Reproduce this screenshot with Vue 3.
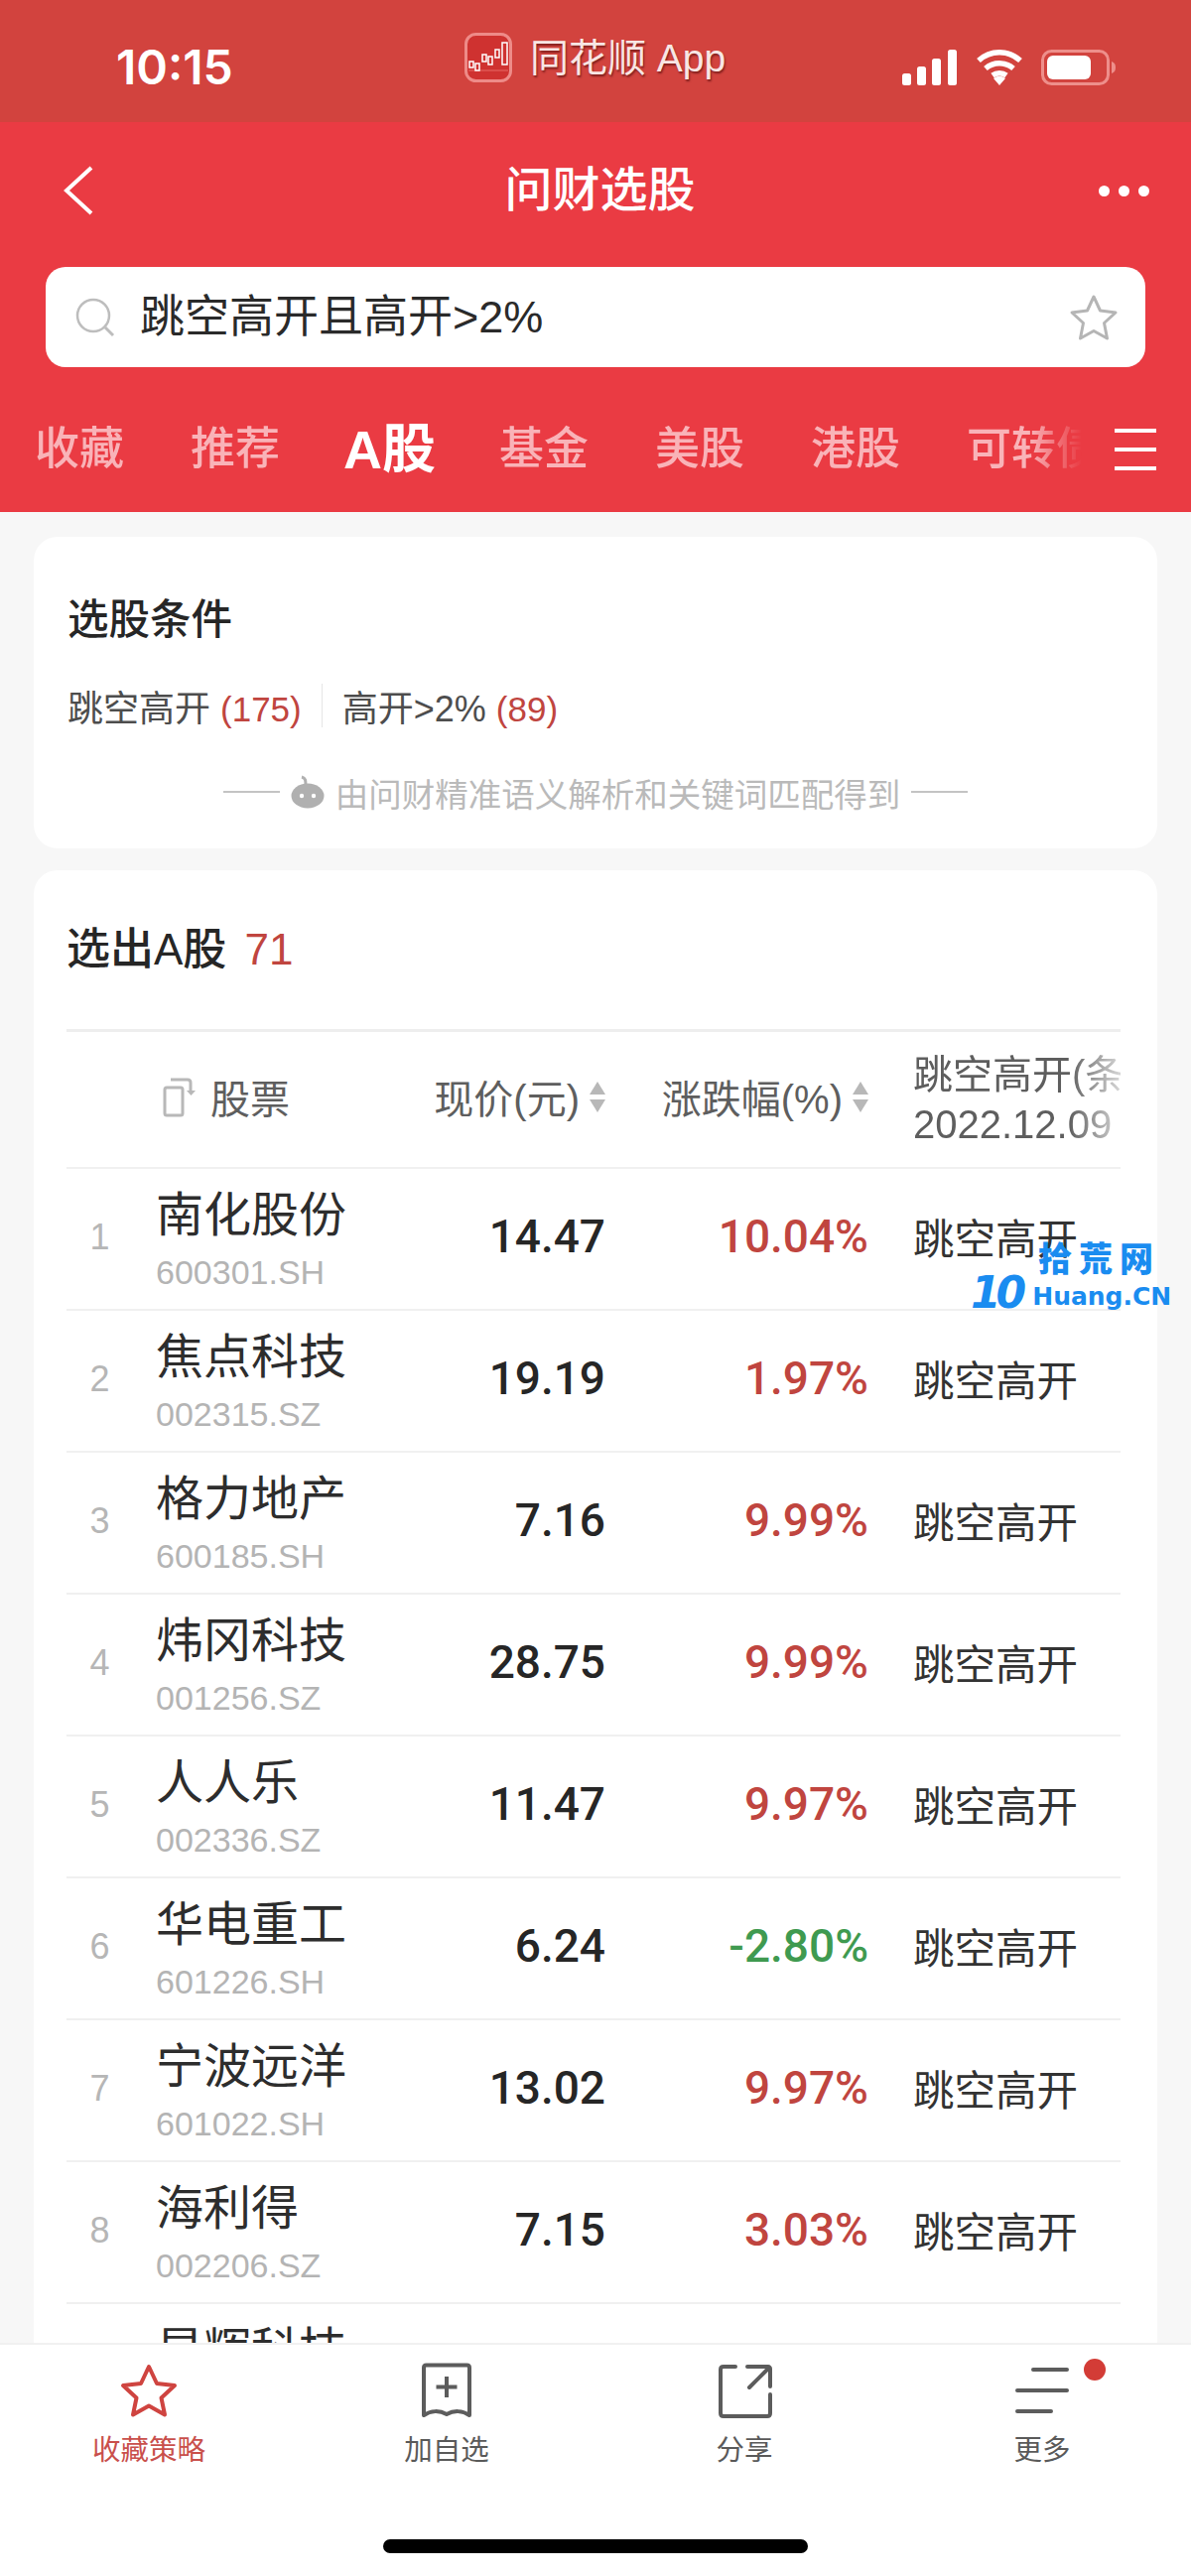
<template>
  <div class="phone">
    <!-- 상태바 -->
    <div class="status-bar">
      <span class="time">10:15</span>
      <div class="island">
        <svg class="app-icon" width="48" height="50" viewBox="0 0 48 50">
          <rect x="1.500" y="1.500" width="45" height="47" rx="10" fill="#cf3230" stroke="#ee8b88" stroke-width="3" />
          <path d="M4 38h40" stroke="#e86a66" stroke-width="1" />
          <g fill="none" stroke="#fff" stroke-width="1.500">
            <rect x="5" y="29" width="4" height="6" /><rect x="11" y="31" width="4" height="7" />
            <rect x="18" y="22" width="4" height="7" /><rect x="24" y="24" width="4" height="8" />
            <rect x="31" y="17" width="4" height="8" /><rect x="38" y="10" width="5" height="22" />
          </g>
        </svg>
        <span class="app-name">同花顺 App</span>
      </div>
      <div class="status-icons">
        <svg width="56" height="36" viewBox="0 0 56 36" fill="#fff">
          <rect x="0" y="24" width="9" height="12" rx="2.500" /><rect x="15" y="17" width="9" height="19" rx="2.500" />
          <rect x="30" y="9" width="9" height="27" rx="2.500" /><rect x="46" y="0" width="9" height="36" rx="2.500" />
        </svg>
        <svg width="48" height="36" viewBox="0 0 48 36">
          <path d="M3 11C15 0 33 0 45 11M10 19c8-7 20-7 28 0M17 26c4-3 10-3 14 0" fill="none" stroke="#fff" stroke-width="5.500" />
          <path d="M18 29c4-3 8-3 12 0l-6 7z" fill="#fff" />
        </svg>
        <svg width="76" height="36" viewBox="0 0 76 36">
          <rect x="1.500" y="1.500" width="66" height="33" rx="9" fill="none" stroke="#ee8f8b" stroke-width="3" />
          <rect x="6" y="6" width="44" height="24" rx="6" fill="#fff" />
          <path d="M71 12c3 1 4 3 4 6s-1 5-4 6z" fill="#ee8f8b" />
        </svg>
      </div>
    </div>

    <!-- 상단 헤더 -->
    <header class="head">
      <div class="nav">
        <svg class="back" width="30" height="50" viewBox="0 0 30 50">
          <path d="M28 2L3 25l25 23" fill="none" stroke="#fff" stroke-width="4" />
        </svg>
        <span class="nav-title">问财选股</span>
        <div class="dots"><i></i><i></i><i></i></div>
      </div>
      <div class="search">
        <svg width="40" height="40" viewBox="0 0 40 40">
          <circle cx="18" cy="18" r="16" fill="none" stroke="#bdbdbd" stroke-width="2.500" />
          <path d="M30 30l8 8" stroke="#bdbdbd" stroke-width="3" />
        </svg>
        <span class="search-text">跳空高开且高开&gt;2%</span>
        <svg class="search-star" width="50" height="48" viewBox="0 0 50 48">
          <path d="M25 3l6.500 14 15.500 2-11.500 10.500 3 15.500-13.500-7.500-13.500 7.500 3-15.500-11.500-10.500 15.500-2z" fill="none" stroke="#b5b5b5" stroke-width="3" stroke-linejoin="round" />
        </svg>
      </div>
      <div class="tabs">
        <div class="tab-list">
          <span v-for="t in tabs" :key="t" class="tab" :class="{ on: t === 'A股' }">{{ t }}</span>
        </div>
        <div class="tab-menu"><i></i><i></i><i></i></div>
      </div>
    </header>

    <main class="content">
      <section class="card cond-card">
        <h2 class="card-title">选股条件</h2>
        <div class="conds">
          <span>跳空高开 <em>(175)</em></span>
          <i class="cond-sep"></i>
          <span>高开&gt;2% <em>(89)</em></span>
        </div>
        <div class="note">
          <i class="note-line"></i>
          <svg width="34" height="34" viewBox="0 0 34 34">
            <path d="M15 10c0-4 0-7-4-8" fill="none" stroke="#b0b0b0" stroke-width="3" />
            <ellipse cx="17" cy="21" rx="16.500" ry="12.500" fill="#b0b0b0" />
            <circle cx="11" cy="21" r="2.200" fill="#fff" /><circle cx="23" cy="21" r="2.200" fill="#fff" />
          </svg>
          <span class="note-text">由问财精准语义解析和关键词匹配得到</span>
          <i class="note-line"></i>
        </div>
      </section>

      <section class="card list-card">
        <h2 class="card-title list-title">选出A股 <em class="total">71</em></h2>
        <div class="table">
          <div class="row row-head">
            <span></span>
            <div class="th-stock">
              <svg width="34" height="42" viewBox="0 0 34 42">
                <rect x="2" y="12" width="18" height="28" rx="2" fill="none" stroke="#b8b8b8" stroke-width="3" />
                <path d="M8 4h17c2 0 3 1 3 3v8" fill="none" stroke="#b8b8b8" stroke-width="3" />
                <path d="M24 15h9l-4.500 5z" fill="#b8b8b8" />
              </svg>
              <span>股票</span>
            </div>
            <div class="th-sort">现价(元)<span class="sort"><i class="up"></i><i class="down"></i></span></div>
            <div class="th-sort">涨跌幅(%)<span class="sort"><i class="up"></i><i class="down"></i></span></div>
            <div class="th-cond"><span>跳空高开(条件</span><span>2022.12.09</span></div>
          </div>

          <div v-for="(s, i) in stocks" :key="s.name" class="row">
            <span class="num">{{ i + 1 }}</span>
            <div class="stock">
              <span class="name">{{ s.name }}</span>
              <span class="code">{{ s.code }}</span>
            </div>
            <span class="price">{{ s.price }}</span>
            <span class="pct" :class="{ down: s.pct.startsWith('-') }">{{ s.pct }}</span>
            <span class="gap">跳空高开</span>
          </div>
        </div>
      </section>
    </main>

    <!-- 하단 메뉴 -->
    <footer class="foot">
      <div class="foot-tabs">
        <div class="foot-item active">
          <svg width="60" height="56" viewBox="0 0 60 56">
            <path d="M30 4l8 17 18 2-13.500 12.500 3.500 17-16-9-16 9 3.500-17L4 23l18-2z" fill="none" stroke="#cf4440" stroke-width="4" stroke-linejoin="round" />
          </svg>
          <span>收藏策略</span>
        </div>
        <div class="foot-item">
          <svg width="60" height="56" viewBox="0 0 60 56">
            <path d="M7 5c0-1.500 1-2.500 2.500-2.500h41c1.500 0 2.500 1 2.500 2.500v48c-7-5-16-5-23-1-7-4-16-4-23 1z" fill="none" stroke="#5c5c5c" stroke-width="4" stroke-linejoin="round" />
            <path d="M30 14v21M19.500 24.500h21" stroke="#5c5c5c" stroke-width="4" />
          </svg>
          <span>加自选</span>
        </div>
        <div class="foot-item">
          <svg width="60" height="56" viewBox="0 0 60 56">
            <path d="M21 4H9C7 4 6 5 6 7v44c0 2 1 3 3 3h44c2 0 3-1 3-3V32" fill="none" stroke="#5c5c5c" stroke-width="4" stroke-linecap="round" />
            <path d="M33 4h21c1 0 2 1 2 2v18M54 6L35 25" fill="none" stroke="#5c5c5c" stroke-width="4" stroke-linecap="round" />
          </svg>
          <span>分享</span>
        </div>
        <div class="foot-item">
          <svg width="60" height="56" viewBox="0 0 60 56">
            <path d="M21 7h34M5 28h50M5 49h34" stroke="#5c5c5c" stroke-width="4" stroke-linecap="round" />
          </svg>
          <span>更多</span>
          <i class="red-dot"></i>
        </div>
      </div>
      <div class="home-bar"></div>
    </footer>

    <!-- 워터마크 -->
    <div class="watermark">
      <div class="wm-cn">拾荒网</div>
      <div class="wm-en"><b>10</b>Huang.CN</div>
    </div>
  </div>
</template>

<script setup>
const tabs = ['收藏', '推荐', 'A股', '基金', '美股', '港股', '可转债']

// 9번째 행은 이름 윗부분만 보인다
const stocks = [
  { name: '南化股份', code: '600301.SH', price: '14.47', pct: '10.04%' },
  { name: '焦点科技', code: '002315.SZ', price: '19.19', pct: '1.97%' },
  { name: '格力地产', code: '600185.SH', price: '7.16', pct: '9.99%' },
  { name: '炜冈科技', code: '001256.SZ', price: '28.75', pct: '9.99%' },
  { name: '人人乐', code: '002336.SZ', price: '11.47', pct: '9.97%' },
  { name: '华电重工', code: '601226.SH', price: '6.24', pct: '-2.80%' },
  { name: '宁波远洋', code: '601022.SH', price: '13.02', pct: '9.97%' },
  { name: '海利得', code: '002206.SZ', price: '7.15', pct: '3.03%' },
  { name: '星辉科技', code: '', price: '', pct: '' },
]
</script>

<style>
html, body { margin: 0; background: #f7f7f7; }
</style>

<style scoped>
.phone {
  position: relative;
  display: flex;
  flex-direction: column;
  width: 1200px;
  height: 2596px;
  overflow: hidden;
  background: #f7f7f7;
  font-family: "Liberation Sans", "Noto Sans CJK SC", sans-serif;
  color: #2b2b2b;
}

/* status bar */
.status-bar {
  flex: 0 0 123px;
  display: flex;
  align-items: flex-start;
  background: #d2433e;
  color: #fff;
}
.time {
  margin: 40px 0 0 117px;
  width: 351px;
  font-size: 48px;
  line-height: 56px;
  font-weight: 600;
  font-family: Inter, "Liberation Sans", sans-serif;
}
.island {
  display: flex;
  align-items: center;
  gap: 18px;
  margin-top: 33px;
  height: 50px;
}
.app-name {
  font-size: 39px;
  line-height: 50px;
  margin-top: 2px;
  color: #f8e6e4;
  text-shadow: 1px 2px 2px rgba(60, 0, 0, 0.55);
}
.status-icons {
  position: absolute;
  top: 50px;
  left: 909px;
  display: flex;
  gap: 18px;
}

/* red header */
.head {
  flex: 0 0 393px;
  background: #ea3b43;
  color: #fff;
  padding: 0 46px;
  box-sizing: border-box;
}
.nav {
  height: 146px;
  display: flex;
  align-items: center;
  justify-content: space-between;
  padding: 0 0 8px 18px;
  box-sizing: border-box;
  margin-right: -4px;
}
.nav-title {
  font-size: 48px;
  line-height: 60px;
  margin-left: 8px;
  font-weight: 500;
}
.dots { display: flex; gap: 9px; }
.dots i {
  width: 11px;
  height: 11px;
  border-radius: 50%;
  background: #fff;
}
.search {
  height: 101px;
  display: flex;
  align-items: center;
  background: #fff;
  border-radius: 20px;
  padding: 0 27px 0 30px;
}
.search-text {
  flex: 1;
  margin-left: 25px;
  font-size: 45px;
  line-height: 60px;
  color: #2a2a2a;
}
.tabs {
  display: flex;
  align-items: center;
  height: 146px;
  margin: 0 -35px 0 -11px;
  padding-top: 20px;
  box-sizing: border-box;
}
.tab-list {
  flex: 0 0 1055px;
  display: flex;
  align-items: center;
  gap: 67px;
  overflow: hidden;
  white-space: nowrap;
  -webkit-mask-image: linear-gradient(90deg, #000 95%, transparent 100%);
  mask-image: linear-gradient(90deg, #000 95%, transparent 100%);
}
.tab {
  font-size: 45px;
  line-height: 64px;
  color: #f9b3b8;
  font-weight: 500;
}
.tab.on {
  font-size: 54px;
  color: #fff;
  font-weight: 700;
  margin: 0 -3px;
}
.tab-menu {
  margin-left: 33px;
  display: flex;
  flex-direction: column;
  gap: 15px;
}
.tab-menu i {
  display: block;
  width: 42px;
  height: 4px;
  background: #fff;
}

/* cards */
.content {
  flex: 1;
  min-height: 0;
  overflow: hidden;
  padding: 25px 34px 0;
  display: flex;
  flex-direction: column;
  gap: 22px;
}
.card {
  background: #fff;
  border-radius: 24px;
  flex: none;
}
.cond-card { padding: 56px 34px 35px; }
.card-title {
  margin: 0;
  font-size: 41.500px;
  line-height: 56px;
  font-weight: 500;
  color: #262626;
}
.list-title { font-size: 44px; }
.card-title em { font-style: normal; }
.total { color: #c0453f; margin-left: 6px; }
.conds {
  display: flex;
  align-items: center;
  margin-top: 36px;
  height: 44px;
  font-size: 36px;
  color: #4d4d4d;
}
.conds em { font-style: normal; color: #c0453f; font-size: 35px; }
.cond-sep {
  width: 1px;
  height: 44px;
  background: #e6e6e6;
  margin: 0 20px;
}
.note {
  margin-top: 43px;
  height: 44px;
  display: flex;
  align-items: center;
  justify-content: center;
  gap: 11px;
  color: #bababa;
}
.note-line {
  width: 57px;
  height: 2px;
  background: #c4c4c4;
}
.note-text {
  font-size: 33.500px;
  white-space: nowrap;
}

/* table */
.list-card { padding: 52px 37px 0 33px; }
.table {
  margin-top: 52px;
  border-top: 3px solid #eeeeee;
  overflow: hidden;
}
.row {
  display: grid;
  grid-template-columns: 91px 300px 152px 265px 45px 209px;
  height: 143px;
  box-sizing: border-box;
  border-bottom: 2px solid #f0f0f0;
  align-items: center;
}
.row > :nth-child(5) { grid-column: 6; }
.row-head {
  height: 138px;
  font-size: 40px;
  color: #5e5e5e;
}
.th-stock {
  display: flex;
  align-items: center;
  gap: 14px;
  margin-left: 6px;
  padding-bottom: 6px;
}
.th-sort {
  justify-self: end;
  white-space: nowrap;
  display: flex;
  align-items: center;
  gap: 10px;
  padding-bottom: 6px;
}
.sort {
  display: flex;
  flex-direction: column;
  gap: 5px;
}
.sort i {
  width: 0;
  height: 0;
  border-left: 8px solid transparent;
  border-right: 8px solid transparent;
}
.sort .up { border-bottom: 13px solid #b8b8b8; }
.sort .down { border-top: 13px solid #b8b8b8; }
.th-cond {
  display: flex;
  flex-direction: column;
  line-height: 50px;
  white-space: nowrap;
  overflow: hidden;
  -webkit-mask-image: linear-gradient(90deg, #000 75%, rgba(0, 0, 0, 0.25) 100%);
  mask-image: linear-gradient(90deg, #000 75%, rgba(0, 0, 0, 0.25) 100%);
}
.num {
  font-size: 36px;
  color: #b6b6b6;
  text-align: center;
  margin: 0 0 0 -24px;
  padding-bottom: 4px;
}
.stock {
  display: flex;
  flex-direction: column;
  align-self: start;
  padding-top: 19px;
  margin-left: -1px;
}
.name {
  font-size: 48px;
  line-height: 56px;
  color: #2d2d2d;
}
.code {
  margin-top: 9px;
  font-size: 34px;
  line-height: 40px;
  color: #b4b4b4;
}
.price, .pct {
  justify-self: end;
  font-family: Roboto, "Liberation Sans", sans-serif;
  font-size: 46px;
  font-weight: 500;
  padding-bottom: 5px;
}
.price { color: #262626; }
.pct { color: #c0453f; }
.pct.down { color: #3f9a50; }
.gap {
  font-size: 41.500px;
  color: #333;
  padding-bottom: 5px;
}

/* footer */
.foot {
  flex: 0 0 235px;
  background: #fff;
  border-top: 2px solid #f1f1f1;
  box-sizing: border-box;
  position: relative;
  z-index: 1;
}
.foot-tabs {
  display: grid;
  grid-template-columns: repeat(4, 300px);
  padding-top: 18px;
}
.foot-item {
  position: relative;
  display: flex;
  flex-direction: column;
  align-items: center;
  gap: 12px;
  font-size: 28.500px;
  line-height: 40px;
  color: #5a5a5a;
}
.foot-item.active { color: #c9504c; }
.red-dot {
  position: absolute;
  top: -4px;
  left: 192px;
  width: 22px;
  height: 22px;
  border-radius: 50%;
  background: #d33c36;
}
.home-bar {
  position: absolute;
  left: 386px;
  top: 196px;
  width: 428px;
  height: 14px;
  border-radius: 7px;
  background: #000;
}

/* watermark */
.watermark {
  position: absolute;
  left: 978px;
  top: 1245px;
  width: 210px;
  color: #1a8cf0;
  z-index: 2;
}
.wm-cn {
  margin: 3px 0 -3px 68px;
  font-family: "Noto Sans CJK SC", sans-serif;
  font-size: 34px;
  line-height: 38px;
  font-weight: 900;
  letter-spacing: 7px;
  white-space: nowrap;
}
.wm-en {
  display: flex;
  align-items: flex-end;
  font-family: "DejaVu Sans", sans-serif;
  font-weight: 700;
  font-size: 25px;
  line-height: 32px;
  white-space: nowrap;
  margin-top: -2px;
}
.wm-en b {
  font-size: 44px;
  line-height: 40px;
  font-style: italic;
  letter-spacing: -5px;
  margin-right: 11px;
}
</style>
